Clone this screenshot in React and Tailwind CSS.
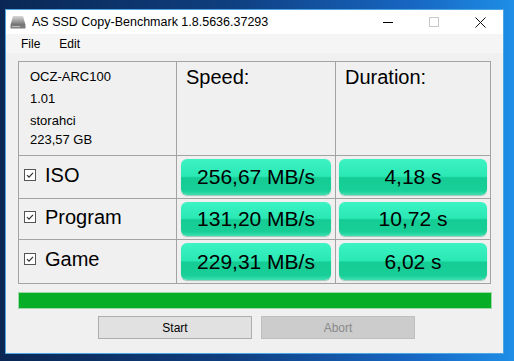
import { useState } from 'react';

const font = { fontFamily: '"Liberation Sans", Arial, sans-serif' };

function DriveIcon() {
  return (
    <svg width="16" height="14" viewBox="0 0 16 14" className="shrink-0">
      <defs>
        <linearGradient id="drv" x1="0" y1="0" x2="0" y2="1">
          <stop offset="0" stopColor="#d8d8d8" />
          <stop offset="0.6" stopColor="#9a9a9a" />
          <stop offset="1" stopColor="#6e6e6e" />
        </linearGradient>
      </defs>
      <path d="M3 1h10l2.5 9H0.5z" fill="url(#drv)" />
      <rect x="0.5" y="10" width="15" height="3.5" rx="0.5" fill="#7a7a7a" />
      <rect x="2" y="11" width="8" height="1.2" fill="#b8b8b8" />
    </svg>
  );
}

function Check() {
  return (
    <span className="inline-flex h-[12px] w-[12px] shrink-0 items-center justify-center border border-[#555] bg-white">
      <svg width="10" height="10" viewBox="0 0 10 10">
        <path d="M2 5.2l2 2 4-4.4" fill="none" stroke="#333" strokeWidth="1.2" />
      </svg>
    </span>
  );
}

function Pill({ children }) {
  return (
    <div className="flex h-full items-center justify-center rounded-[6px] bg-[linear-gradient(to_bottom,#3cf3c4_0%,#2ae8b4_48%,#16cc95_52%,#18cf98_88%,#3ee0b0_100%)] text-[21px] text-black shadow-[0_1px_1px_rgba(0,120,80,0.35)]">
      {children}
    </div>
  );
}

const rows = [
  { name: 'ISO', speed: '256,67 MB/s', dur: '4,18 s', h: 'h-[42px]' },
  { name: 'Program', speed: '131,20 MB/s', dur: '10,72 s', h: 'h-[40px]' },
  { name: 'Game', speed: '229,31 MB/s', dur: '6,02 s', h: 'h-[43px]' },
];

export default function App() {
  const [checked] = useState(true);
  return (
    <div
      className="h-[361px] w-[514px] overflow-hidden bg-[linear-gradient(to_right,#0a2754_0%,#0f3f80_45%,#1766c2_80%,#1e8ee6_100%)] pl-[5px] pt-[9px]"
      style={font}
    >
      <div className="flex h-[345px] w-[499px] flex-col border border-[#4ca6e4] bg-[#f0f0f0]">
        {/* title bar */}
        <div className="flex h-[24px] items-center bg-white pl-[4px] text-[12.5px] text-black">
          <DriveIcon />
          <span className="ml-[6px] mt-[1px]">AS SSD Copy-Benchmark 1.8.5636.37293</span>
          <div className="ml-auto flex h-full items-center">
            <div className="flex h-full w-[46px] items-center justify-center">
              <div className="h-px w-[10px] bg-black" />
            </div>
            <div className="flex h-full w-[46px] items-center justify-center">
              <div className="h-[10px] w-[10px] border border-[#c8c8c8]" />
            </div>
            <div className="flex h-full w-[46px] items-center justify-center">
              <svg width="11" height="11" viewBox="0 0 11 11">
                <path d="M0.5 0.5l10 10M10.5 0.5l-10 10" stroke="#111" strokeWidth="1" />
              </svg>
            </div>
          </div>
        </div>
        {/* menu */}
        <div className="flex h-[19px] items-center gap-[19px] bg-[#f5f5f5] pl-[15px] text-[12px] text-black">
          <span>File</span>
          <span>Edit</span>
        </div>

        <div className="flex flex-1 flex-col px-[12px] pt-[8px]">
          {/* table */}
          <div className="grid grid-cols-[157px_158px_154px] gap-px bg-[#a3a3a3] p-px">
            <div className="flex h-[93px] flex-col bg-[#f0f0f0] pl-[11px] pt-[4px] text-[13px] leading-[22px] text-black">
              <span>OCZ-ARC100</span>
              <span>1.01</span>
              <span>storahci</span>
              <span className="-mt-[3px]">223,57 GB</span>
            </div>
            <div className="h-[93px] bg-[#f0f0f0] pl-[9px] text-[20px] text-black">Speed:</div>
            <div className="h-[93px] bg-[#f0f0f0] pl-[9px] text-[20px] text-black">Duration:</div>
            {rows.map((r) => (
              <div key={r.name} className="contents">
                <div className={`flex ${r.h} items-center gap-[9px] bg-[#f0f0f0] pl-[5px] pb-[5px] text-[20px] text-black`}>
                  {checked && <Check />}
                  <span>{r.name}</span>
                </div>
                <div className={`${r.h} bg-[#f0f0f0] py-[3px] pl-[4px] pr-[4px]`}>
                  <Pill>{r.speed}</Pill>
                </div>
                <div className={`${r.h} bg-[#f0f0f0] py-[3px] pl-[3px] pr-[3px]`}>
                  <Pill>{r.dur}</Pill>
                </div>
              </div>
            ))}
          </div>

          {/* progress */}
          <div className="mt-[8px] h-[17px] w-[474px] border border-[#9fd8a8] bg-[#06ad27]" />

          {/* buttons */}
          <div className="mt-[7px] flex gap-[9px] pl-[80px] text-[12px]">
            <button className="flex h-[23px] w-[154px] items-center justify-center border border-[#adadad] bg-[#e1e1e1] text-black">
              Start
            </button>
            <button className="flex h-[23px] w-[154px] items-center justify-center border border-[#bfbfbf] bg-[#cccccc] text-[#8a8a8a]">
              Abort
            </button>
          </div>
        </div>
      </div>
    </div>
  );
}
